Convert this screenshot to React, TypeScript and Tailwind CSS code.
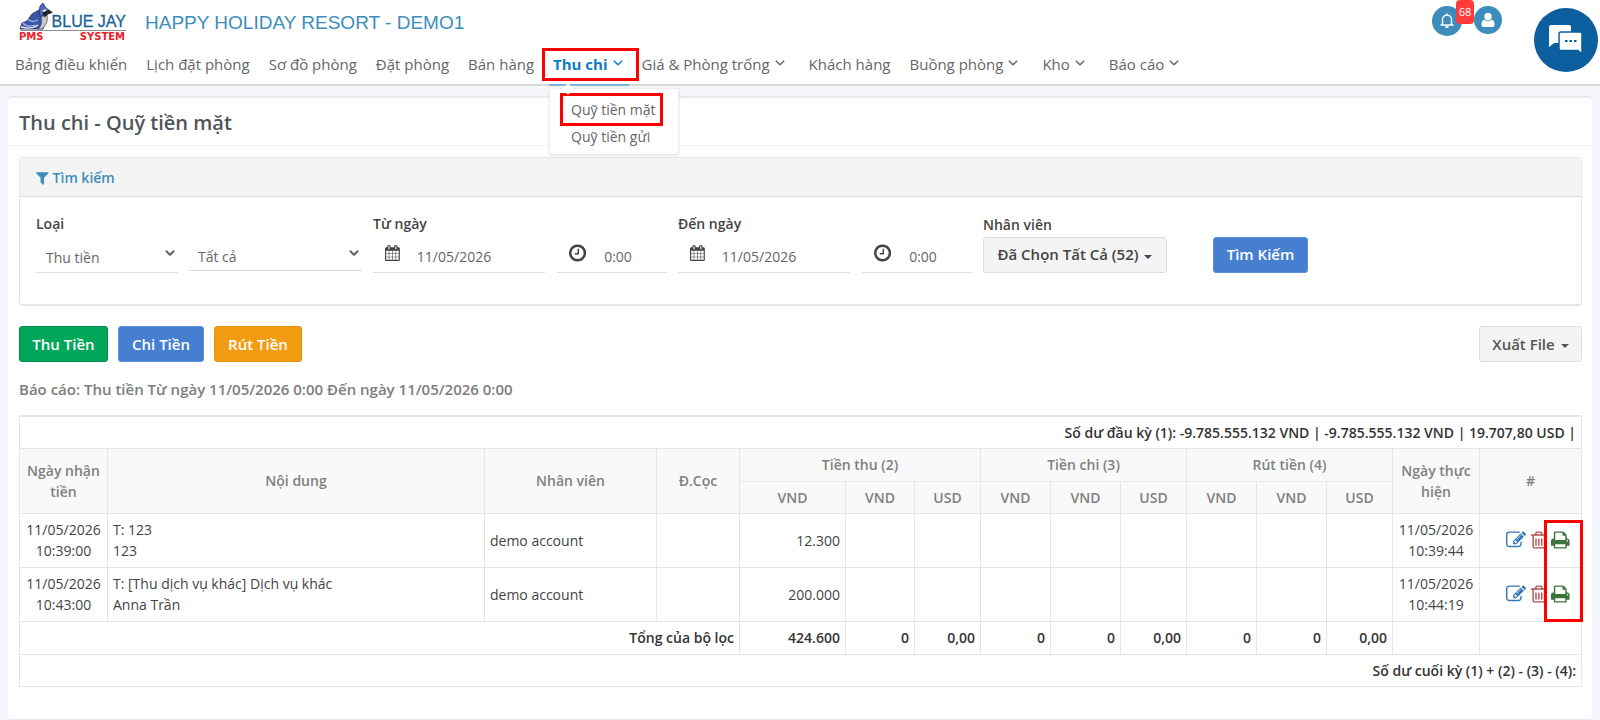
import type { ReactNode } from 'react';

const icons = {
  filter: {
    width: 1408,
    path: 'M1403 295q17 41-14 70l-493 493v742q0 42-39 59-13 5-25 5-27 0-45-19l-256-256q-19-19-19-45v-486l-493-493q-31-29-14-70 17-39 59-39h1280q42 0 59 39z',
  },
  calendar: {
    width: 1664,
    path: 'M128 1664h288v-288h-288v288zM480 1664h320v-288h-320v288zM128 1312h288v-320h-288v320zM480 1312h320v-320h-320v320zM128 928h288v-288h-288v288zM864 1664h320v-288h-320v288zM480 928h320v-288h-320v288zM1248 1664h288v-288h-288v288zM864 1312h320v-320h-320v320zM512 448v-288q0-13-9.5-22.5t-22.5-9.5h-64q-13 0-22.5 9.5t-9.5 22.5v288q0 13 9.5 22.5t22.5 9.5h64q13 0 22.5-9.5t9.5-22.5zM1248 1312h288v-320h-288v320zM864 928h320v-288h-320v288zM1248 928h288v-288h-288v288zM1280 448v-288q0-13-9.5-22.5t-22.5-9.5h-64q-13 0-22.5 9.5t-9.5 22.5v288q0 13 9.5 22.5t22.5 9.5h64q13 0 22.5-9.5t9.5-22.5zM1664 384v1280q0 52-38 90t-90 38h-1408q-52 0-90-38t-38-90v-1280q0-52 38-90t90-38h128v-96q0-66 47-113t113-47h64q66 0 113 47t47 113v96h384v-96q0-66 47-113t113-47h64q66 0 113 47t47 113v96h128q52 0 90 38t38 90z',
  },
  clock: {
    width: 1536,
    path: 'M896 544v448q0 14-9 23t-23 9h-320q-14 0-23-9t-9-23v-64q0-14 9-23t23-9h224v-352q0-14 9-23t23-9h64q14 0 23 9t9 23zM1312 896q0-148-73-273t-198-198-273-73-273 73-198 198-73 273 73 273 198 198 273 73 273-73 198-198 73-273zM1536 896q0 209-103 385.5t-279.5 279.5-385.5 103-385.5-103-279.5-279.5-103-385.5 103-385.5 279.5-279.5 385.5-103 385.5 103 279.5 279.5 103 385.5z',
  },
  edit: {
    width: 1792,
    path: 'M888 1184l116-116-152-152-116 116v56h96v96h56zM1328 464q-16-16-33 1l-350 350q-17 17-1 33t33-1l350-350q17-17 1-33zM1408 1058v190q0 119-84.5 203.5t-203.5 84.5h-832q-119 0-203.5-84.5t-84.5-203.5v-832q0-119 84.5-203.5t203.5-84.5h832q63 0 117 25 15 7 18 23 3 17-9 29l-49 49q-14 14-32 8-23-6-45-6h-832q-66 0-113 47t-47 113v832q0 66 47 113t113 47h832q66 0 113-47t47-113v-126q0-13 9-22l64-64q15-15 35-7t20 29zM1312 320l288 288-672 672h-288v-288zM1756 452l-92 92-288-288 92-92q28-28 68-28t68 28l152 152q28 28 28 68t-28 68z',
  },
  trash: {
    width: 1408,
    path: 'M512 800v576q0 14-9 23t-23 9h-64q-14 0-23-9t-9-23v-576q0-14 9-23t23-9h64q14 0 23 9t9 23zM768 800v576q0 14-9 23t-23 9h-64q-14 0-23-9t-9-23v-576q0-14 9-23t23-9h64q14 0 23 9t9 23zM1024 800v576q0 14-9 23t-23 9h-64q-14 0-23-9t-9-23v-576q0-14 9-23t23-9h64q14 0 23 9t9 23zM1152 1460v-948h-896v948q0 22 7 40.5t14.5 27 10.5 8.5h832q3 0 10.5-8.5t14.5-27 7-40.5zM480 384h448l-48-117q-7-9-17-11h-317q-10 2-17 11zM1408 416v64q0 14-9 23t-23 9h-96v948q0 83-47 143.5t-113 60.5h-832q-66 0-113-58.5t-47-141.5v-952h-96q-14 0-23-9t-9-23v-64q0-14 9-23t23-9h309l70-167q15-37 54-63t79-26h320q40 0 79 26t54 63l70 167h309q14 0 23 9t9 23z',
  },
  print: {
    width: 1664,
    path: 'M384 1536h896v-256h-896v256zM384 896h896v-384h-160q-40 0-68-28t-28-68v-160h-640v640zM1536 960q0-26-19-45t-45-19-45 19-19 45 19 45 45 19 45-19 19-45zM1664 960v416q0 13-9.5 22.5t-22.5 9.5h-224v160q0 40-28 68t-68 28h-960q-40 0-68-28t-28-68v-160h-224q-13 0-22.5-9.5t-9.5-22.5v-416q0-79 56.5-135.5t135.5-56.5h64v-544q0-40 28-68t68-28h672q40 0 88 20t76 48l152 152q28 28 48 76t20 88v256h64q79 0 135.5 56.5t56.5 135.5z',
  },
};

function Icon({ name, className }: { name: keyof typeof icons; className: string }) {
  const icon = icons[name];
  return (
    <svg viewBox={`0 0 ${icon.width} 1792`} className={`w-auto shrink-0 ${className}`} fill="currentColor" aria-hidden="true">
      <path d={icon.path} />
    </svg>
  );
}

function Chevron({ className }: { className: string }) {
  return (
    <svg viewBox="0 0 10 6" className={className} fill="none" stroke="currentColor" aria-hidden="true">
      <path d="M0.8 0.8 5 4.8 9.2 0.8" />
    </svg>
  );
}

function Caret() {
  return (
    <svg viewBox="0 0 8 4" className="mt-1 h-1 w-2" fill="currentColor" aria-hidden="true">
      <path d="M0 0h8L4 4z" />
    </svg>
  );
}

function Logo() {
  return (
    <svg viewBox="0 0 110 40" className="h-10 w-[110px]" role="img" aria-label="Blue Jay PMS System">
      {/* tail and wing */}
      <path d="M2 27 4 21 9 19 14 12 21 8 27 14 25 27Z" fill="#3a57a7" stroke="#1d2a55" strokeWidth="0.8" />
      <path d="M5 21q4 5 12 2M9 17q5 4 11 1" fill="none" stroke="#9fb4e6" strokeWidth="1.3" />
      <path d="M3 25q10 3 17-2" fill="none" stroke="#e8edfa" strokeWidth="1.4" />
      {/* breast */}
      <path d="M20 27q5-4 3-13l6-1q2 8-5 14z" fill="#c4c6cb" stroke="#333" strokeWidth="0.6" />
      {/* head */}
      <path d="M21 10 22 4 25 1 28 6 31 8 34 10.500 30 12 27 14 22 14Z" fill="#4a6bc0" stroke="#1d2a55" strokeWidth="0.7" />
      <path d="M25 9l6-1 4 2.500-5 1.500-3 3q-3-2-2-6z" fill="#23252e" />
      <path d="M24 9q3-3 5-1l-3 2z" fill="#e8edfa" />
      <path d="M2 28.500h106" stroke="#8a8f98" />
      <text x="108" y="25" textAnchor="end" fontFamily="'Liberation Sans', sans-serif" fontSize="16" fill="#1a6496" stroke="#1a6496" strokeWidth="0.3">
        BLUE JAY
      </text>
      <text x="1" y="38" fontFamily="'DejaVu Sans', sans-serif" fontWeight="700" fontSize="10" fill="#f0202a">
        PMS
      </text>
      <text x="107" y="38" textAnchor="end" fontFamily="'DejaVu Sans', sans-serif" fontWeight="700" fontSize="10" fill="#f0202a">
        SYSTEM
      </text>
    </svg>
  );
}

function NavItem({ label, dropdown }: { label: string; dropdown?: boolean }) {
  return (
    <a href="#" className="flex items-center gap-[5px] whitespace-nowrap">
      {label}
      {dropdown && <Chevron className="mb-0.5 h-1.5 w-2.5 stroke-[1.5]" />}
    </a>
  );
}

function Header() {
  return (
    <header className="relative border-b-2 border-[#d9d9d9] bg-white">
      <div className="flex h-11 items-center pl-[18px] pr-[98px]">
        <Logo />
        <h1 className="ml-[17px] mt-0.5 font-['Liberation_Sans',sans-serif] text-[19px] text-[#3c8dbc]">HAPPY HOLIDAY RESORT - DEMO1</h1>
        <div className="relative mb-0.5 ml-auto flex gap-3">
          <button aria-label="Thông báo" className="flex size-[30px] items-center justify-center rounded-full bg-[#3c8dbc] text-white">
            <svg viewBox="0 0 16 16" className="size-4" fill="none" stroke="currentColor" strokeWidth="1.4">
              <path d="M1.500 12h13M3.500 12V6.500a4.500 4.500 0 0 1 9 0V12M8 2V.5" />
              <path d="M6.500 14h3" strokeWidth="2" />
            </svg>
          </button>
          <span className="absolute -top-1.5 left-6 flex h-6 w-[18px] items-center justify-center rounded-sm bg-[#ff3b3b] text-[11px] text-white">68</span>
          <button aria-label="Tài khoản" className="flex size-7 items-center justify-center rounded-full bg-[#3c8dbc] text-white">
            <svg viewBox="0 0 14 16" className="h-4 w-3.5" fill="currentColor">
              <circle cx="7" cy="4.500" r="3.700" />
              <path d="M3.500 7.500Q7 10.500 10.500 7.500 14 8.500 13.500 13q0 2-2 2h-9q-2 0-2-2Q0 8.500 3.500 7.500z" />
            </svg>
          </button>
        </div>
      </div>

      <nav className="flex h-10 items-center gap-[19px] pl-[15px] text-[15px] text-[#666]">
        <NavItem label="Bảng điều khiển" />
        <NavItem label="Lịch đặt phòng" />
        <NavItem label="Sơ đồ phòng" />
        <NavItem label="Đặt phòng" />
        <NavItem label="Bán hàng" />
        <div className="relative flex h-full items-center font-bold text-[#0f7dc2]">
          <NavItem label="Thu chi" dropdown />
          <div className="pointer-events-none absolute -left-[11px] top-1 h-[33px] w-[97px] border-3 border-[#ff0000]" />
          <div className="absolute -bottom-0.5 -left-1 h-0.5 w-20 bg-[#7ab3d3]" />
          <div className="absolute -left-1 top-11 z-10 flex h-[67px] w-[130px] flex-col rounded-b border border-[#eee] bg-white px-2.5 pt-1 text-sm font-normal text-[#666] shadow-sm">
            <span className="absolute -top-1 left-3.5 size-2 rotate-45 bg-white" />
            <a href="#" className="flex h-[33px] w-[103px] items-center whitespace-nowrap border-3 border-[#ff0000] pl-2">
              Quỹ tiền mặt
            </a>
            <a href="#" className="pl-[11px] leading-[22px]">
              Quỹ tiền gửi
            </a>
          </div>
        </div>
        <NavItem label="Giá & Phòng trống" dropdown />
        <div className="pl-[5px]"><NavItem label="Khách hàng" /></div>
        <NavItem label="Buồng phòng" dropdown />
        <div className="pl-[5px]"><NavItem label="Kho" dropdown /></div>
        <div className="pl-[5px]"><NavItem label="Báo cáo" dropdown /></div>
      </nav>

      <button aria-label="Chat" className="absolute right-0.5 top-2 flex size-16 items-center justify-center rounded-full bg-[#0b5f9f] text-white">
        <svg viewBox="0 0 34 30" className="h-[30px] w-[34px]" fill="currentColor">
          <path d="M2 0h18a2 2 0 0 1 2 2v16H5l-5 4V2a2 2 0 0 1 2-2z" />
          <path d="M12 7h19a2 2 0 0 1 2 2v20l-4-3.500H12a2 2 0 0 1-2-2V9a2 2 0 0 1 2-2z" stroke="#0b5f9f" strokeWidth="1.500" />
          <path d="M16 15h2.500v2H16zM20.500 15H23v2h-2.500zM25 15h2.500v2H25z" fill="#0b5f9f" />
        </svg>
      </button>
    </header>
  );
}

function SelectField({ id, value, className }: { id: string; value: string; className: string }) {
  return (
    <div className={`relative border-b border-[#ddd] ${className}`}>
      <select id={id} aria-label={value} className="h-full w-full appearance-none bg-transparent pl-2.5 pt-1.5">
        <option>{value}</option>
      </select>
      <Chevron className="pointer-events-none absolute right-[3px] top-3 h-1.5 w-2.5 stroke-2" />
    </div>
  );
}

function DateTimeField({ id, label }: { id: string; label: string }) {
  return (
    <div className="shrink-0">
      <label htmlFor={id} className="block font-semibold leading-5 text-[#444]">
        {label}
      </label>
      <div className="mt-1 flex gap-3">
        <div className="flex h-[35px] w-[172px] items-center border-b border-[#ddd] pl-3">
          <Icon name="calendar" className="mb-1 h-4 text-[#444]" />
          <input id={id} type="text" defaultValue="11/05/2026" className="ml-[17px] w-24 bg-transparent pt-1" />
        </div>
        <div className="flex h-[35px] w-[110px] items-center border-b border-[#ddd] pl-3">
          <Icon name="clock" className="mb-1 h-5 text-[#444]" />
          <input type="text" aria-label={`${label} giờ`} defaultValue="0:00" className="ml-[18px] w-14 bg-transparent pt-1" />
        </div>
      </div>
    </div>
  );
}

function Button({ className, children }: { className: string; children: ReactNode }) {
  return (
    <button type="button" className={`flex h-9 items-center justify-center gap-1.5 whitespace-nowrap rounded-[3px] border text-[15px] font-semibold ${className}`}>
      {children}
    </button>
  );
}

function SearchPanel() {
  return (
    <section className="rounded border border-b-2 border-[#e6e6e6]">
      <h3 className="flex h-[39px] items-center gap-1 border-b border-[#ddd] bg-[#f4f4f4] px-4 pt-0.5 text-sm font-semibold text-[#3c8dbc]">
        <Icon name="filter" className="h-4" />
        Tìm kiếm
      </h3>
      <form className="flex h-[107px] items-start gap-[11px] px-4 pt-[17px] text-sm text-[#666]">
        <div className="shrink-0">
          <label htmlFor="type" className="block font-semibold leading-5 text-[#444]">
            Loại
          </label>
          <div className="mt-1 flex items-start gap-2.5">
            <SelectField id="type" value="Thu tiền" className="h-[35px] w-[142px]" />
            <SelectField id="scope" value="Tất cả" className="h-[33px] w-[174px]" />
          </div>
        </div>
        <DateTimeField id="from" label="Từ ngày" />
        <DateTimeField id="to" label="Đến ngày" />
        <div className="shrink-0">
          <p className="mb-0.5 font-semibold leading-[21px] text-[#444]">Nhân viên</p>
          <Button className="w-[184px] border-[#ddd] bg-[#f4f4f4] text-[#444]">
            Đã Chọn Tất Cả (52) <Caret />
          </Button>
        </div>
        <div className="ml-[35px] mt-[23px]">
          <Button className="w-[95px] border-[#5d91d8] bg-[#467fd0] text-white">Tìm Kiếm</Button>
        </div>
      </form>
    </section>
  );
}

const rows = [
  { received: ['11/05/2026', '10:39:00'], content: ['T: 123', '123'], staff: 'demo account', amount: '12.300', done: ['11/05/2026', '10:39:44'] },
  { received: ['11/05/2026', '10:43:00'], content: ['T: [Thu dịch vụ khác] Dịch vụ khác', 'Anna Trần'], staff: 'demo account', amount: '200.000', done: ['11/05/2026', '10:44:19'] },
];

const totals = ['424.600', '0', '0,00', '0', '0', '0,00', '0', '0', '0,00'];
const currencies = ['VND', 'VND', 'USD', 'VND', 'VND', 'USD', 'VND', 'VND', 'USD'];

const cell = 'border border-[#e3e6ea] px-[5px]';
const head = 'border border-[#e3e6ea] px-[5px] font-semibold';

function CashTable() {
  return (
    <table className="w-full table-fixed border-collapse border border-[#e3e6ea] text-sm leading-[21px] text-[#444]">
      <colgroup>
        <col className="w-[88px]" />
        <col />
        <col className="w-[172px]" />
        <col className="w-[83px]" />
        <col className="w-[106px]" />
        <col className="w-[69px]" />
        <col className="w-[66px]" />
        <col className="w-[70px]" />
        <col className="w-[70px]" />
        <col className="w-[66px]" />
        <col className="w-[70px]" />
        <col className="w-[70px]" />
        <col className="w-[66px]" />
        <col className="w-[87px]" />
        <col className="w-[102px]" />
      </colgroup>
      <thead>
        <tr className="h-8">
          <td colSpan={15} className="border border-t-2 border-[#e3e6ea] px-[5px] text-right font-semibold text-[#333]">
            Số dư đầu kỳ (1): -9.785.555.132 VND | -9.785.555.132 VND | 19.707,80 USD |
          </td>
        </tr>
        <tr className="h-[33px] bg-[#f9f9f9] text-[#808080]">
          <th rowSpan={2} className={head}>Ngày nhận tiền</th>
          <th rowSpan={2} className={head}>Nội dung</th>
          <th rowSpan={2} className={head}>Nhân viên</th>
          <th rowSpan={2} className={head}>Đ.Cọc</th>
          <th colSpan={3} className={head}>Tiền thu (2)</th>
          <th colSpan={3} className={head}>Tiền chi (3)</th>
          <th colSpan={3} className={head}>Rút tiền (4)</th>
          <th rowSpan={2} className={head}>Ngày thực hiện</th>
          <th rowSpan={2} className={head}>#</th>
        </tr>
        <tr className="h-8 bg-[#f9f9f9] text-[#808080]">
          {currencies.map((currency, i) => (
            <th key={i} className={head}>{currency}</th>
          ))}
        </tr>
      </thead>
      <tbody>
        {rows.map((row, index) => (
          <tr key={row.amount} className="h-[54px]">
            <td className={`${cell} text-center`}>{row.received[0]}<br />{row.received[1]}</td>
            <td className={cell}>{row.content[0]}<br />{row.content[1]}</td>
            <td className={cell}>{row.staff}</td>
            <td className={cell}></td>
            <td className={`${cell} text-right`}>{row.amount}</td>
            {currencies.slice(1).map((_, i) => (
              <td key={i} className={cell}></td>
            ))}
            <td className={`${cell} text-center`}>{row.done[0]}<br />{row.done[1]}</td>
            <td className={`${cell} relative`}>
              <div className="flex items-center justify-end gap-[5px] pr-1.5">
                <button aria-label="Sửa" className="text-[#337ab7]"><Icon name="edit" className="h-5" /></button>
                <button aria-label="Xóa" className="text-[#b0524f]"><Icon name="trash" className="h-5" /></button>
                <button aria-label="In" className="text-[#3c763d]"><Icon name="print" className="h-5" /></button>
              </div>
              {/* highlight around the print buttons of both rows */}
              {index === 0 && (
                <div className="pointer-events-none absolute -right-0.5 top-1.5 z-10 h-[102px] w-[39px] border-3 border-[#ff0000]" />
              )}
            </td>
          </tr>
        ))}
        <tr className="h-[33px] text-right font-semibold text-[#333]">
          <td colSpan={4} className={cell}>Tổng của bộ lọc</td>
          {totals.map((total, i) => (
            <td key={i} className={cell}>{total}</td>
          ))}
          <td className={cell}></td>
          <td className={cell}></td>
        </tr>
        <tr className="h-8">
          <td colSpan={15} className={`${cell} text-right font-semibold text-[#333]`}>
            Số dư cuối kỳ (1) + (2) - (3) - (4):
          </td>
        </tr>
      </tbody>
    </table>
  );
}

export default function App() {
  return (
    <div className="min-h-screen bg-[#f5f6fb] font-['Open_Sans','Noto_Sans',sans-serif]">
      <Header />
      <main className="mx-2 mt-2.5 rounded border-b border-t-2 border-[#e6eaee] bg-white">
        <h2 className="flex h-12 items-center border-b border-[#f2f2f2] px-[11px] pt-0.5 text-xl font-semibold text-[#50555b]">Thu chi - Quỹ tiền mặt</h2>
        <div className="pb-8 pl-[11px] pr-2.5 pt-[11px]">
          <SearchPanel />
          <div className="mt-5 flex gap-2.5">
            <Button className="w-[89px] border-[#008d4c] bg-[#00a65a] text-white">Thu Tiền</Button>
            <Button className="w-[86px] border-[#5d91d8] bg-[#467fd0] text-white">Chi Tiền</Button>
            <Button className="w-[88px] border-[#e08e0b] bg-[#f39c12] text-white">Rút Tiền</Button>
            <Button className="ml-auto w-[103px] border-[#ddd] bg-[#f4f4f4] text-[#555]">
              Xuất File <Caret />
            </Button>
          </div>
          <p className="mb-[15px] mt-[17px] text-[15px] font-semibold leading-[21px] text-[#7d7d7d]">
            Báo cáo: Thu tiền Từ ngày 11/05/2026 0:00 Đến ngày 11/05/2026 0:00
          </p>
          <CashTable />
        </div>
      </main>
    </div>
  );
}
